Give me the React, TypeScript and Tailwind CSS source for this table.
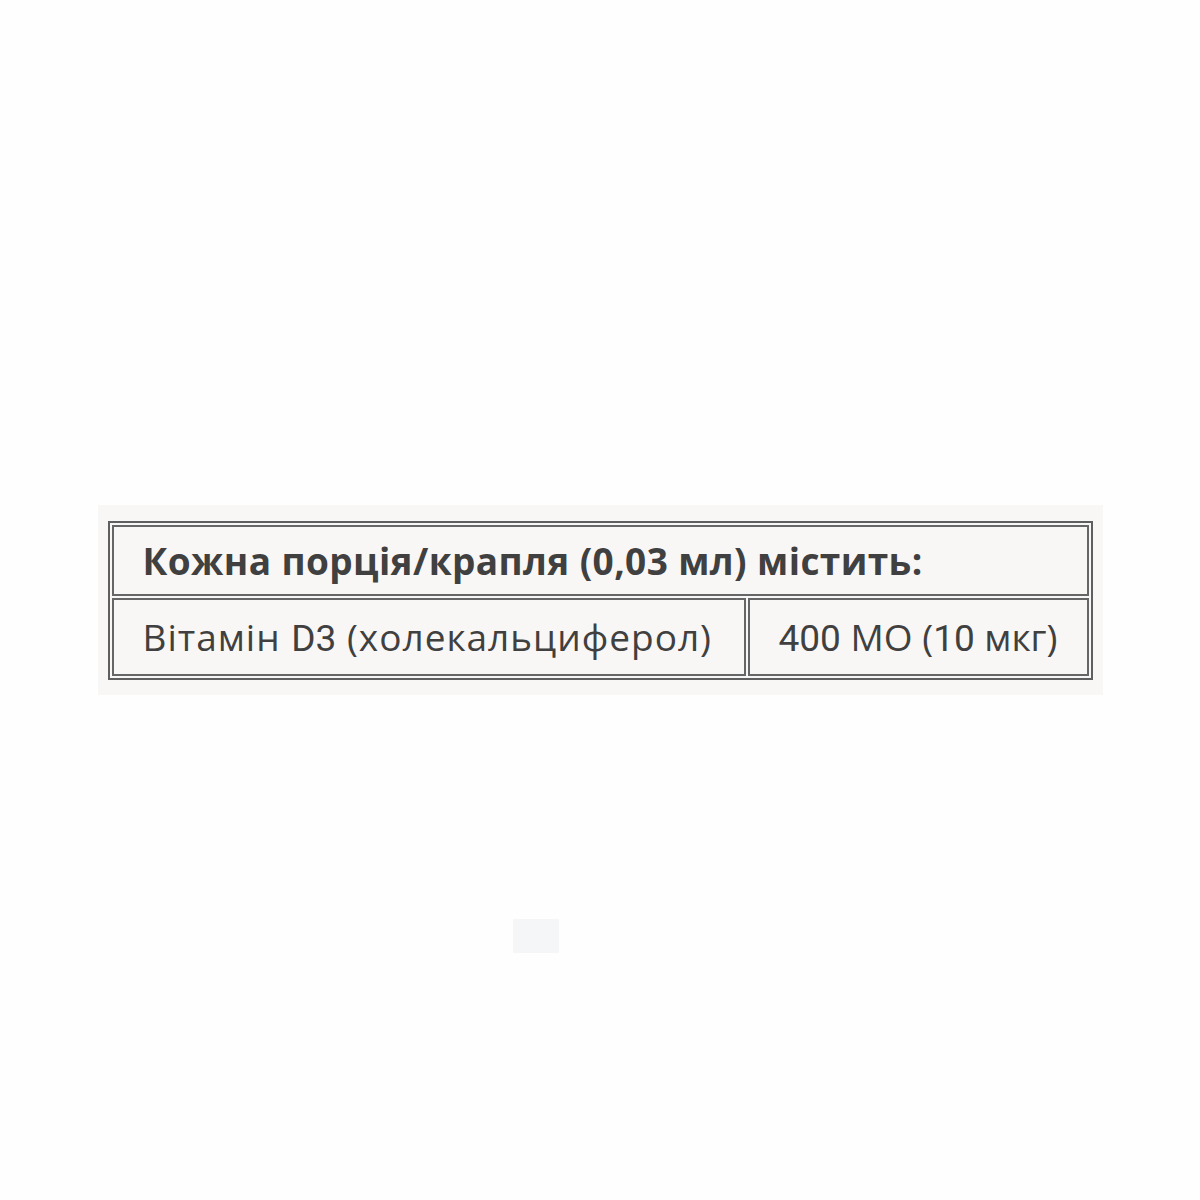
export default function App() {
  return (
    <div className="relative flex min-h-[1200px] items-center justify-center bg-[#fefefe] font-['Open_Sans',sans-serif] text-[#404040]">
      <div className="w-[1005px] bg-[#f9f7f5] px-[10px] pt-[16px] pb-[15px]">
        <table className="w-[985px] border-separate border-spacing-[2px] border-2 border-[#5f5f5f]">
          <tbody>
            <tr>
              <td
                colSpan={2}
                className="h-[71px] border-2 border-[#666] pl-[29px] text-left align-middle text-[37px] font-bold leading-none tracking-[0.4px]"
              >
                Кожна порція/крапля (0,03 мл) містить:
              </td>
            </tr>
            <tr>
              <td className="h-[78px] w-[634px] border-2 border-[#666] pl-[29px] align-middle text-[37px] leading-none tracking-[1px]">
                Вітамін <span className="font-['Roboto',sans-serif] tracking-normal">D3</span> (холекальциферол)
              </td>
              <td className="h-[78px] border-2 border-[#666] text-center align-middle text-[37px] leading-none">
                <span className="font-['Roboto',sans-serif]">400</span> МО (<span className="font-['Roboto',sans-serif]">10</span> мкг)
              </td>
            </tr>
          </tbody>
        </table>
      </div>
      <div className="absolute left-[513px] top-[919px] h-[34px] w-[46px] bg-[#f4f6f8]" />
    </div>
  );
}
